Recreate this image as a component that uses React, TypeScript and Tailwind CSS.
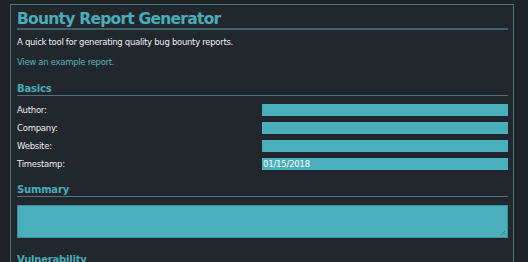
import React from "react";

export default function App() {
  const rows: [string, string][] = [
    ["Author:", ""],
    ["Company:", ""],
    ["Website:", ""],
    ["Timestamp:", "01/15/2018"],
  ];
  return (
    <div className="w-[528px] h-[262px] overflow-hidden bg-[#1f2328] pt-[4px] pl-[10px] font-['DejaVu_Sans',sans-serif]">
      <div className="w-[504px] h-[300px] border border-[#4d7479] bg-[#22272e] pl-[6px] pr-[5px] pt-[6px]">
        <h1 className="text-[15.5px] leading-[17px] tracking-[-0.75px] font-bold text-[#49adb9] border-b-2 border-[#3f6468]">
          Bounty Report Generator
        </h1>
        <p className="mt-[6px] text-[8.5px] leading-[12px] tracking-[-0.3px] text-[#eceef0]">
          A quick tool for generating quality bug bounty reports.
        </p>
        <p className="mt-[8px] text-[8.5px] leading-[12px] tracking-[-0.3px] text-[#52b3bf]">
          View an example report.
        </p>
        <h2 className="mt-[15px] text-[10px] leading-[12px] tracking-[-0.2px] font-bold text-[#49adb9] border-b border-[#4d7479]">
          Basics
        </h2>
        <div className="mt-[8px] flex flex-col gap-[6px]">
          {rows.map(([label, val]) => (
            <div key={label} className="flex items-center h-[12px]">
              <span className="flex-1 text-[8.5px] leading-[12px] tracking-[-0.25px] text-[#eceef0]">{label}</span>
              <input
                readOnly
                value={val}
                className="w-[246px] h-[12px] bg-[#4aafba] text-[8.5px] leading-[12px] tracking-[-0.2px] text-white pl-[1px] outline-none border-0"
              />
            </div>
          ))}
        </div>
        <h2 className="mt-[14px] text-[10px] leading-[12px] tracking-[-0.2px] font-bold text-[#49adb9] border-b border-[#4d7479]">
          Summary
        </h2>
        <div className="mt-[8px] relative h-[33px] bg-[#4aafba] border border-[#3d8f98]">
          <svg className="absolute right-[1px] bottom-[1px]" width="6" height="6" viewBox="0 0 6 6">
            <path d="M5 1 L1 5 M5 3.5 L3.5 5" stroke="#2f7c85" strokeWidth="0.8" />
          </svg>
        </div>
        <h2 className="mt-[16px] text-[10px] leading-[12px] tracking-[-0.2px] font-bold text-[#49adb9]">
          Vulnerability
        </h2>
      </div>
    </div>
  );
}
